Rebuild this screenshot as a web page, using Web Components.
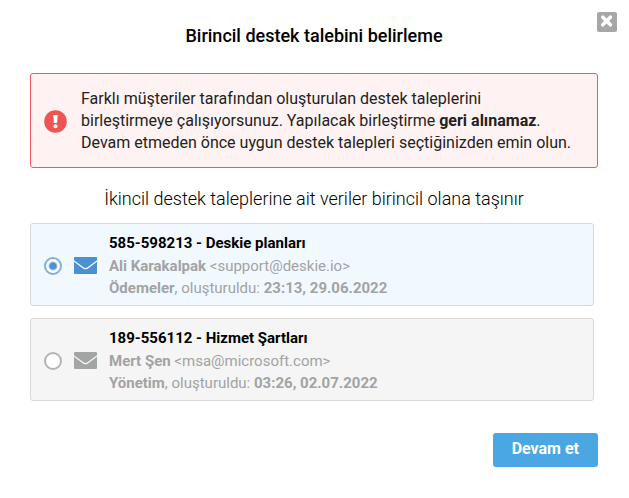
<!DOCTYPE html>
<html lang="tr">
<head>
<meta charset="utf-8">
<title>Birincil destek talebini belirleme</title>
<style>
    body
    {
        margin      : 0;
        background  : #ffffff;
        color       : #222222;
        font-family : Roboto, "Liberation Sans", sans-serif;
        font-size   : 16px;
    }
</style>
</head>
<body>
<merge-dialog heading="Birincil destek talebini belirleme">
    <warning-box>Farklı müşteriler tarafından oluşturulan destek taleplerini<br>birleştirmeye çalışıyorsunuz. Yapılacak birleştirme <b>geri alınamaz</b>.<br>Devam etmeden önce uygun destek talepleri seçtiğinizden emin olun.</warning-box>
    <ticket-list label="İkincil destek taleplerine ait veriler birincil olana taşınır">
        <ticket-item checked>
            <span slot="title">585-598213 - Deskie planları</span>
            <span slot="from"><b>Ali Karakalpak</b> &lt;support@deskie.io&gt;</span>
            <span slot="info"><b>Ödemeler</b>, oluşturuldu: <b>23:13, 29.06.2022</b></span>
        </ticket-item>
        <ticket-item>
            <span slot="title">189-556112 - Hizmet Şartları</span>
            <span slot="from"><b>Mert Şen</b> &lt;msa@microsoft.com&gt;</span>
            <span slot="info"><b>Yönetim</b>, oluşturuldu: <b>03:26, 02.07.2022</b></span>
        </ticket-item>
    </ticket-list>
    <submit-button slot="footer">Devam et</submit-button>
</merge-dialog>

<script>
class MergeDialog extends HTMLElement
{
    constructor()
    {
        super();
        this.shadowDOM = this.attachShadow({mode:"open"});
    }

    connectedCallback()
    {
        this.render();
    }

    render()
    {
        this.shadowDOM.innerHTML =
        `
        <style>
            :host
            {
                display     : block;
                position    : relative;
                padding     : 24px 31px 31px 30px;
            }

            h1
            {
                margin      : 0 0 26px;
                font-size   : 18px;
                line-height : 23px;
                font-weight : 500;
                text-align  : center;
                color       : #000000;
            }

            .close
            {
                position    : absolute;
                top         : 12px;
                right       : 12px;
                width       : 20px;
                height      : 20px;
                padding     : 0;
                border      : 0;
                border-radius : 2px;
                background  : #a6a8a7;
                cursor      : pointer;
            }

            .close svg
            {
                display     : block;
            }

            footer
            {
                display     : flex;
                justify-content : flex-end;
                margin-top  : 32px;
            }
        </style>

        <button type="button" class="close" aria-label="Kapat">
            <svg width="20" height="20" viewBox="0 0 20 20"><path d="M5.800 5.200l7.600 7.600M13.400 5.200l-7.600 7.600" stroke="#fff" stroke-width="3.600" stroke-linecap="round"/></svg>
        </button>
        <h1>${this.getAttribute("heading")}</h1>
        <slot></slot>
        <footer><slot name="footer"></slot></footer>
        `
    }
}

class WarningBox extends HTMLElement
{
    constructor()
    {
        super();
        this.shadowDOM = this.attachShadow({mode:"open"});
    }

    connectedCallback()
    {
        this.render();
    }

    render()
    {
        this.shadowDOM.innerHTML =
        `
        <style>
            :host
            {
                display     : flex;
                align-items : center;
                gap         : 14px;
                padding     : 14px 13px 13px;
                border      : 1px solid #ee5a5a;
                border-radius : 3px;
                background  : #fff2f2;
                line-height : 22px;
            }

            svg
            {
                flex        : none;
            }

            p
            {
                margin      : 0;
            }
        </style>

        <svg width="23" height="23" viewBox="0 0 23 23"><circle cx="11.500" cy="11.500" r="11.300" fill="#ed5555"/><path d="M9.300 5h4.400l-.6 8h-3.200z" fill="#fff"/><circle cx="11.500" cy="16.200" r="2" fill="#fff"/></svg>
        <p><slot></slot></p>
        `
    }
}

class TicketList extends HTMLElement
{
    constructor()
    {
        super();
        this.shadowDOM = this.attachShadow({mode:"open"});
    }

    connectedCallback()
    {
        this.render();
        this.addEventListener("pick", (event) => this.pick(event.target));
    }

    pick(item)
    {
        this.querySelectorAll("ticket-item").forEach((other) => other.toggleAttribute("checked", other === item));
    }

    render()
    {
        this.shadowDOM.innerHTML =
        `
        <style>
            :host
            {
                display     : block;
                margin-top  : 19px;
            }

            h2
            {
                margin      : 0 0 12px;
                font-size   : 18px;
                line-height : 24px;
                font-weight : 300;
                text-align  : center;
                color       : #000000;
            }

            .items
            {
                display     : grid;
                gap         : 12px;
                padding-right : 4px;
            }
        </style>

        <h2 id="label">${this.getAttribute("label")}</h2>
        <div class="items" role="radiogroup" aria-labelledby="label"><slot></slot></div>
        `
    }
}

class TicketItem extends HTMLElement
{
    static get observedAttributes()
    {
        return ["checked"];
    }

    constructor()
    {
        super();
        this.shadowDOM = this.attachShadow({mode:"open"});
    }

    connectedCallback()
    {
        this.render();
    }

    attributeChangedCallback()
    {
        const input = this.shadowDOM.querySelector("input");
        if (input) input.checked = this.hasAttribute("checked");
    }

    render()
    {
        this.shadowDOM.innerHTML =
        `
        <style>
            :host
            {
                display     : block;
                border      : 1px solid #d9d9d9;
                border-radius : 3px;
                background  : #f5f5f5;
                color       : #a3a3a3;
                font-size   : 15px;
                line-height : 22px;
            }

            :host([checked])
            {
                background  : #f1f9ff;
            }

            label
            {
                display     : flex;
                align-items : center;
                gap         : 12px;
                padding     : 8px 13px 6px;
                cursor      : pointer;
            }

            input
            {
                appearance  : none;
                flex        : none;
                box-sizing  : border-box;
                width       : 18px;
                height      : 18px;
                margin      : 0;
                border      : 2px solid #b4b4b4;
                border-radius : 50%;
                background  : #ffffff;
            }

            input:checked
            {
                border-color : #7fb0df;
                background  : radial-gradient(circle, #4a90d2 3px, #ffffff 5px);
            }

            svg
            {
                flex        : none;
                fill        : #a3a5a4;
            }

            :host([checked]) svg
            {
                fill        : #4a90d2;
            }

            .line
            {
                display     : block;
            }

            .title
            {
                line-height : 23px;
                color       : #000000;
                font-weight : 700;
            }
        </style>

        <label>
            <input type="radio" name="primary" ${this.hasAttribute("checked") ? "checked" : ""}>
            <svg width="23" height="17" viewBox="0 0 23 17"><path d="M1 0h21q1 0 1 1v2.200l-9.500 7q-2 1.400-4 0L0 3.200V1q0-1 1-1z"/><path d="M0 4.800l9 6.600q2.500 1.700 5 0l9-6.600V16q0 1-1 1H1q-1 0-1-1z"/></svg>
            <span>
                <span class="line title"><slot name="title"></slot></span>
                <span class="line"><slot name="from"></slot></span>
                <span class="line"><slot name="info"></slot></span>
            </span>
        </label>
        `
        this.shadowDOM.querySelector("input").addEventListener("change", () => this.dispatchEvent(new CustomEvent("pick", {bubbles:true})));
    }
}

class SubmitButton extends HTMLElement
{
    constructor()
    {
        super();
        this.shadowDOM = this.attachShadow({mode:"open"});
    }

    connectedCallback()
    {
        this.render();
    }

    render()
    {
        this.shadowDOM.innerHTML =
        `
        <style>
            :host
            {
                display     : block;
            }

            button
            {
                padding     : 5px 19px 7px;
                border      : 0;
                border-radius : 3px;
                background  : #4ba7e3;
                color       : #ffffff;
                font        : 700 16px/22px Roboto, "Liberation Sans", sans-serif;
                cursor      : pointer;
            }
        </style>

        <button type="button"><slot></slot></button>
        `
    }
}

customElements.define('merge-dialog',MergeDialog);
customElements.define('warning-box',WarningBox);
customElements.define('ticket-list',TicketList);
customElements.define('ticket-item',TicketItem);
customElements.define('submit-button',SubmitButton);
</script>
</body>
</html>
